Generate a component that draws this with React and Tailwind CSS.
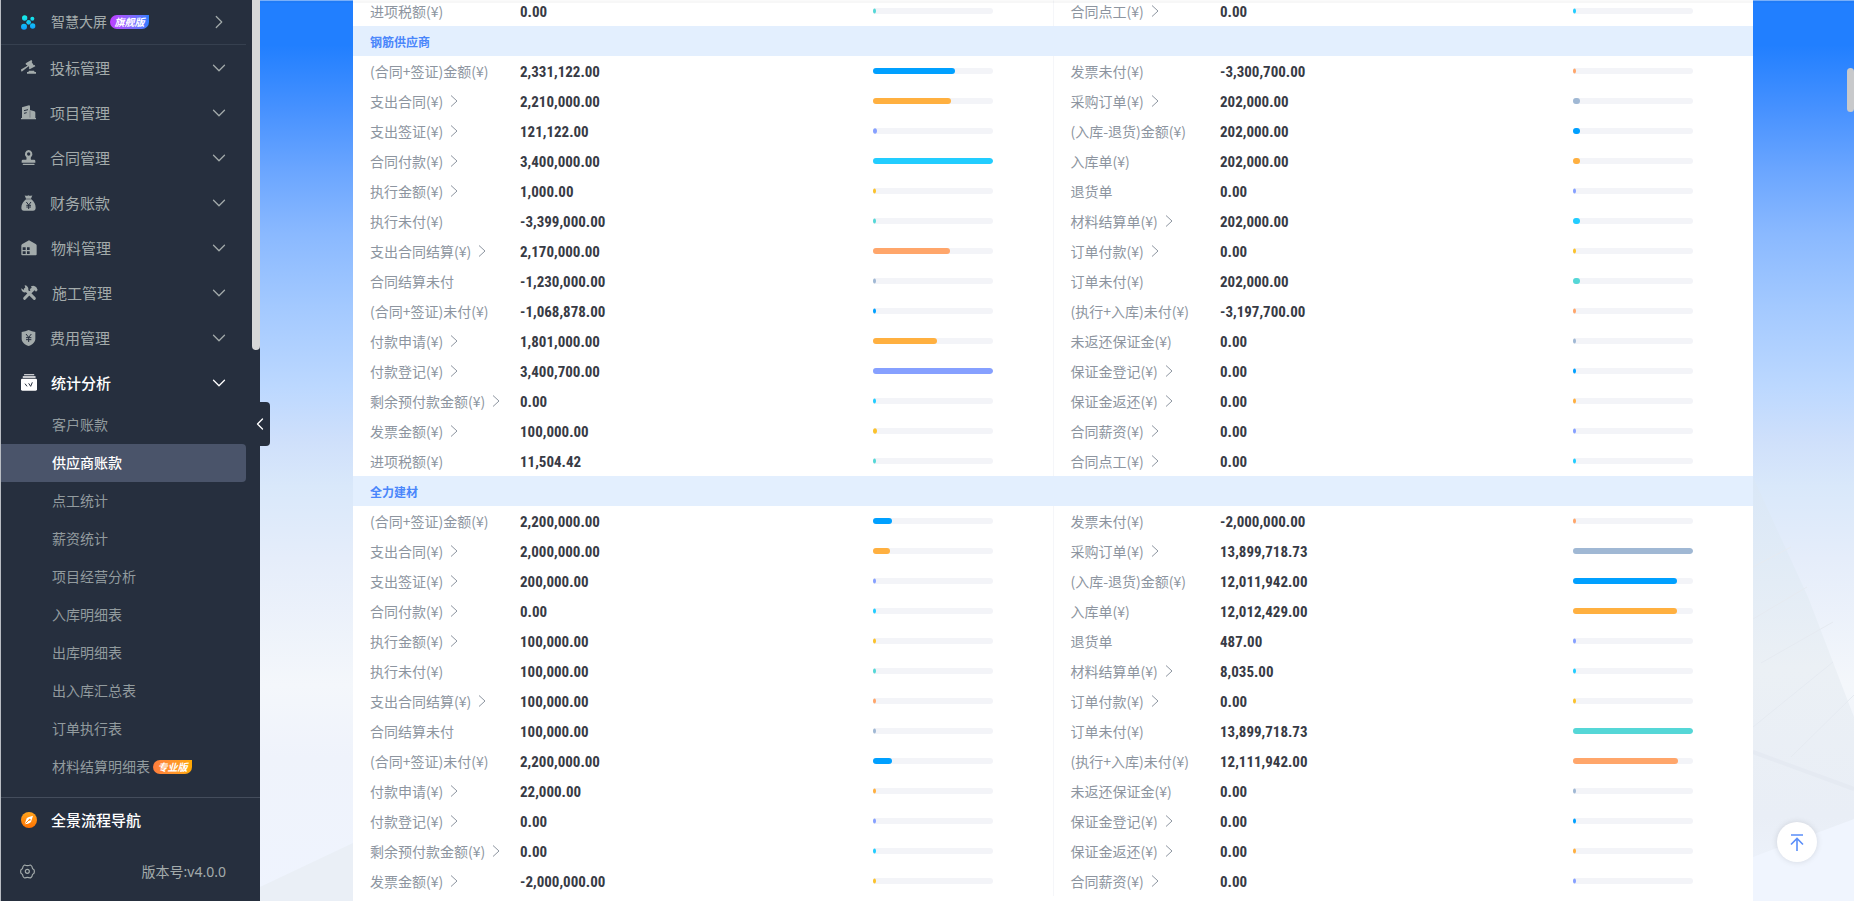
import React from 'react';
import { ChevronDown, ChevronLeft, ChevronRight } from 'lucide-react';

const BAR_COLORS = ['#00a0ff', '#ffb040', '#86a0ff', '#22cdff', '#fbc22d', '#55d7d7', '#ffa66b', '#a0b8d4'];

// 左右两列字段，link 表示可以点进明细
const LEFT_FIELDS = [
  { label: '(合同+签证)金额(¥)' },
  { label: '支出合同(¥)', link: true },
  { label: '支出签证(¥)', link: true },
  { label: '合同付款(¥)', link: true },
  { label: '执行金额(¥)', link: true },
  { label: '执行未付(¥)' },
  { label: '支出合同结算(¥)', link: true },
  { label: '合同结算未付' },
  { label: '(合同+签证)未付(¥)' },
  { label: '付款申请(¥)', link: true },
  { label: '付款登记(¥)', link: true },
  { label: '剩余预付款金额(¥)', link: true },
  { label: '发票金额(¥)', link: true },
  { label: '进项税额(¥)' },
];

const RIGHT_FIELDS = [
  { label: '发票未付(¥)' },
  { label: '采购订单(¥)', link: true },
  { label: '(入库-退货)金额(¥)' },
  { label: '入库单(¥)' },
  { label: '退货单' },
  { label: '材料结算单(¥)', link: true },
  { label: '订单付款(¥)', link: true },
  { label: '订单未付(¥)' },
  { label: '(执行+入库)未付(¥)' },
  { label: '未返还保证金(¥)' },
  { label: '保证金登记(¥)', link: true },
  { label: '保证金返还(¥)', link: true },
  { label: '合同薪资(¥)', link: true },
  { label: '合同点工(¥)', link: true },
];

const SUPPLIERS = [
  {
    name: '钢筋供应商',
    left: [2331122, 2210000, 121122, 3400000, 1000, -3399000, 2170000, -1230000, -1068878, 1801000, 3400700, 0, 100000, 11504.42],
    right: [-3300700, 202000, 202000, 202000, 0, 202000, 0, 202000, -3197700, 0, 0, 0, 0, 0],
  },
  {
    name: '全力建材',
    left: [2200000, 2000000, 200000, 0, 100000, 100000, 100000, 100000, 2200000, 22000, 0, 0, -2000000],
    right: [-2000000, 13899718.73, 12011942, 12012429, 487, 8035, 0, 13899718.73, 12111942, 0, 0, 0, 0],
  },
];

const formatMoney = (n) =>
  n.toLocaleString('en-US', { minimumFractionDigits: 2, maximumFractionDigits: 2 });

const ScreenIcon = () => (
  <svg width="15" height="15" viewBox="0 0 45 45">
    <defs>
      <linearGradient id="dots" x1="0" y1="0" x2="0" y2="45" gradientUnits="userSpaceOnUse">
        <stop offset="0" stopColor="#16f3e6" />
        <stop offset="1" stopColor="#0f9bff" />
      </linearGradient>
    </defs>
    <g fill="url(#dots)">
      <circle cx="11" cy="9" r="8" />
      <circle cx="34" cy="11" r="6" />
      <circle cx="23" cy="22" r="7" />
      <circle cx="9" cy="35" r="9" />
      <circle cx="35" cy="33" r="8" />
    </g>
  </svg>
);

const BidIcon = () => (
  <svg width="15" height="15" viewBox="0 0 45 45" fill="currentColor">
    <path d="M14 10L31 0l3 4-2 2 6 10 3-1 2 4-17 9-3-4 2-2-2-3L2 35l-3-6 20-12-1-3-3 1z" />
    <path d="M24 32h15l2 4h4v5H18v-5h4z" />
  </svg>
);

const ProjectIcon = () => (
  <svg width="15" height="15" viewBox="0 0 45 45" fill="currentColor">
    <path d="M3 7L24 1q3 0 3 3v11l13 4q3 1 3 4v16h2v4H0v-4h3z" />
    <path d="M9 17l12-3M9 25l8-2" stroke="#262f3e" strokeWidth="3" />
    <path d="M27 16v22" stroke="#262f3e" strokeWidth="1" />
  </svg>
);

const ContractIcon = () => (
  <svg width="15" height="15" viewBox="0 0 45 45" fill="currentColor">
    <path fillRule="evenodd" d="M23 0a12 12 0 0 1 8 20c-2 2-2 5-1 9h9q4 0 4 4v5H2v-5q0-4 4-4h10c1-4 1-7-1-9A12 12 0 0 1 23 0zm0 7a5 5 0 1 0 0 10a5 5 0 0 0 0-10z" />
    <rect x="5" y="41" width="36" height="4" rx="2" />
  </svg>
);

const MoneyIcon = () => (
  <svg width="15" height="16" viewBox="0 0 45 48" fill="currentColor">
    <path d="M11 1q6 3 11 0q6 3 12 0l-4 10H15zM15 13h16c8 6 13 15 13 25q0 9-8 9H9q-8 0-8-9c0-10 6-19 14-25z" />
    <path d="M16 21l7 9l7-9M23 30v12M16 31h14M16 36h14" fill="none" stroke="#262f3e" strokeWidth="3" />
  </svg>
);

const MaterialIcon = () => (
  <svg width="16" height="16" viewBox="0 0 48 48" fill="currentColor">
    <path d="M24 1l20 11q3 2 3 5v26q0 3-3 3H4q-3 0-3-3V17q0-3 3-5z" />
    <path d="M5 22h9v8H5zM18 22h8v8h-8zM5 34h9v8H5zM18 34h8v8h-8z" fill="#262f3e" />
  </svg>
);

const BuildIcon = () => (
  <svg width="17" height="16" viewBox="0 0 51 48">
    <path d="M13 13L40 40M38 12L11 40" stroke="currentColor" strokeWidth="9" strokeLinecap="round" fill="none" />
    <path d="M11 1a11 11 0 0 1 11 13l-8 8A11 11 0 0 1 1 10l7 5 5-5z" fill="currentColor" />
    <path d="M30 4q9-5 16 3l4 8-5 5-5-5-6 6-8-8 6-5z" fill="currentColor" />
  </svg>
);

const CostIcon = () => (
  <svg width="15" height="16" viewBox="0 0 45 48" fill="currentColor">
    <path d="M23 0q10 5 20 6v20c0 10-8 17-20 22C10 43 2 36 2 26V6q11-1 21-6z" />
    <path d="M15 12l8 10l8-10M23 22v14M15 23h16M15 29h16" fill="none" stroke="#262f3e" strokeWidth="3" />
  </svg>
);

const StatsIcon = () => (
  <svg width="16" height="17" viewBox="0 0 48 51" fill="currentColor">
    <rect x="9" y="1" width="31" height="3" rx="1" />
    <rect x="5" y="7" width="39" height="4" rx="1" />
    <rect x="0" y="14" width="48" height="36" rx="4" />
    <path d="M12 29l6 8M23 28l6 9M29 37l5-12" fill="none" stroke="#262f3e" strokeWidth="3" />
  </svg>
);

const CompassIcon = () => (
  <svg width="16" height="16" viewBox="0 0 48 48">
    <defs>
      <linearGradient id="compass" x1="0" y1="0" x2="0" y2="1">
        <stop offset="0" stopColor="#ffa51e" />
        <stop offset="1" stopColor="#ff7200" />
      </linearGradient>
    </defs>
    <circle cx="24" cy="24" r="24" fill="url(#compass)" />
    <path d="M36 11L30 30q-4 4-9 5l-10 2l6-18q3-3 7-4z" fill="#fff" />
    <path d="M13 35L25 23" stroke="#ff8a0c" strokeWidth="3" />
    <circle cx="26" cy="23" r="3" fill="#ff8a0c" />
  </svg>
);

const SettingIcon = () => (
  <svg width="15" height="15" viewBox="0 0 45 45" fill="none" stroke="currentColor" strokeWidth="3.5" strokeLinejoin="round">
    <path d="M14 3q8 4 17 0q4 2 5 5q0 6 6 9q2 6 0 11q-6 3-6 9q-2 3-5 5q-9-4-17 0q-4-2-5-5q0-6-6-9q-2-6 0-11q6-3 6-9q1-3 5-5z" />
    <circle cx="22" cy="22" r="6" />
  </svg>
);

const TopIcon = () => (
  <svg width="14" height="17" viewBox="0 0 14 17" fill="none" stroke="#5b8ff9" strokeWidth="1.6">
    <path d="M1 1h12M7 17V4M1 10.500L7 4.500L13 10.500" />
  </svg>
);

const MENUS = [
  { name: '投标管理', icon: BidIcon },
  { name: '项目管理', icon: ProjectIcon },
  { name: '合同管理', icon: ContractIcon },
  { name: '财务账款', icon: MoneyIcon },
  { name: '物料管理', icon: MaterialIcon },
  { name: '施工管理', icon: BuildIcon },
  { name: '费用管理', icon: CostIcon },
  { name: '统计分析', icon: StatsIcon, active: true },
];

const SUB_MENUS = [
  { name: '客户账款' },
  { name: '供应商账款', active: true },
  { name: '点工统计' },
  { name: '薪资统计' },
  { name: '项目经营分析' },
  { name: '入库明细表' },
  { name: '出库明细表' },
  { name: '出入库汇总表' },
  { name: '订单执行表' },
  { name: '材料结算明细表', badge: '专业版' },
];

const Badge = ({ className, children }) => (
  <span className={`flex h-[14px] w-[39px] items-center justify-center rounded-full rounded-tr-none bg-linear-to-r text-[10px] leading-none font-bold text-white italic ${className}`}>
    {children}
  </span>
);

const Sidebar = () => (
  <aside className="relative z-10 flex w-[260px] shrink-0 flex-col border-l border-[#b9bdc3] bg-[#262f3e] text-[#a3abab]">
    <nav className="min-h-0 flex-1 overflow-hidden pr-[14px]">
      <button type="button" className="flex h-[45px] w-full items-center border-b border-[#36404f] pr-4 pl-5 text-sm">
        <ScreenIcon />
        <span className="ml-[15px]">智慧大屏</span>
        <Badge className="ml-[3px] from-[#bd3cff] to-[#2b7dff]">旗舰版</Badge>
        <ChevronRight size={22} strokeWidth={1.3} className="ml-auto" />
      </button>
      {MENUS.map(({ name, icon: Icon, active }) => (
        <button
          key={name}
          type="button"
          className={`flex h-[45px] w-full items-center pr-4 pl-5 text-[15px] ${active ? 'font-medium text-white' : ''}`}
        >
          <Icon />
          <span className="ml-3.5">{name}</span>
          <ChevronDown size={22} strokeWidth={1.4} className="ml-auto" />
        </button>
      ))}
      <ul className="pt-px text-sm text-[#929b9e]">
        {SUB_MENUS.map((item) => (
          <li key={item.name}>
            <a
              href="#"
              className={`flex h-[38px] items-center rounded-r-sm pl-[51px] ${item.active ? 'bg-[#4a546a] font-medium text-white' : ''}`}
            >
              {item.name}
              {item.badge && <Badge className="ml-[3px] from-[#ff7d3c] to-[#ffa800]">{item.badge}</Badge>}
            </a>
          </li>
        ))}
      </ul>
    </nav>

    <div className="border-t border-[#444d5c]">
      <a href="#" className="flex h-11 items-center gap-3.5 pl-5 text-[15px] font-medium text-white">
        <CompassIcon />
        全景流程导航
      </a>
      <div className="flex h-[59px] items-center justify-between pr-[34px] pl-[19px] text-sm">
        <button type="button" aria-label="设置"><SettingIcon /></button>
        <span>版本号:v4.0.0</span>
      </div>
    </div>

    {/* 滚动条 */}
    <div className="absolute top-0 right-0 h-[350px] w-2 rounded-b-full bg-[#d7d8d9]" />
    {/* 收起菜单 */}
    <button
      type="button"
      aria-label="收起菜单"
      className="absolute top-[402px] -right-2.5 flex h-11 w-5 items-center justify-center rounded-r-sm bg-[#262f3e] text-white"
    >
      <ChevronLeft size={20} strokeWidth={1.6} />
    </button>
  </aside>
);

const Backdrop = () => (
  <>
    <svg className="absolute right-0 bottom-0" width="101" height="424" viewBox="0 0 101 424">
      <defs>
        <linearGradient id="tower" x1="0" y1="0" x2="0" y2="1">
          <stop offset="0" stopColor="#d9e7f7" />
          <stop offset="0.450" stopColor="#ebf0f5" />
          <stop offset="0.800" stopColor="#e9eef6" />
          <stop offset="1" stopColor="#eff4fd" />
        </linearGradient>
      </defs>
      <path d="M0 0L55 120L101 240V424H0z" fill="url(#tower)" />
      <path d="M0 90L38 70M0 142L54 110M8 186L80 145M0 250L80 185M38 280L101 218" stroke="#e5eaf1" fill="none" />
      <path d="M0 275L101 312" stroke="#e5eaf2" strokeWidth="4" />
      <path d="M0 380L101 342V424H0z" fill="#f0f5fe" />
    </svg>
    <svg className="absolute bottom-0 left-0" width="93" height="58" viewBox="0 0 93 58">
      <path d="M0 44L93 0V58H0z" fill="#eaeff6" />
    </svg>
  </>
);

const Arrow = () => (
  <svg width="8" height="12" viewBox="0 0 8 12" fill="none" stroke="currentColor" className="ml-[7px]">
    <path d="M1 0.500L7 6L1 11.500" />
  </svg>
);

const Cells = ({ field, value, max, index }) => (
  <>
    <th scope="row" className="pl-[17px] text-left font-normal whitespace-nowrap text-[#8d95a0]">
      {field.link ? (
        <a href="#" className="flex items-center">
          {field.label}
          <Arrow />
        </a>
      ) : (
        field.label
      )}
    </th>
    <td className="pt-0.5 font-['Roboto_Condensed','Roboto',sans-serif] text-[15px] font-bold text-[#383b45]">
      {formatMoney(value)}
    </td>
    <td className={index < 14 ? 'border-r border-[#f5f6f9]' : ''}>
      <div className="h-1.5 w-[120px] overflow-hidden rounded-full bg-[#f3f4f8]">
        <div
          className="h-full min-w-[3px] rounded-r-full"
          style={{
            width: `${Math.max(0, (value / max) * 100)}%`,
            backgroundColor: BAR_COLORS[index % BAR_COLORS.length],
          }}
        />
      </div>
    </td>
  </>
);

const Row = ({ i, left, right, max }) => (
  <tr className="h-[30px]">
    <Cells field={LEFT_FIELDS[i]} value={left} max={max} index={i} />
    <Cells field={RIGHT_FIELDS[i]} value={right} max={max} index={i + 14} />
  </tr>
);

const SupplierGroup = ({ supplier }) => {
  const max = Math.max(...supplier.left, ...supplier.right);
  return (
    <tbody>
      <tr className="h-[30px] bg-[#e3effe]">
        <th scope="colgroup" colSpan={6} className="pt-px pl-[17px] text-left text-xs font-bold text-[#4a86fb]">
          {supplier.name}
        </th>
      </tr>
      {supplier.left.map((value, i) => (
        <Row key={LEFT_FIELDS[i].label} i={i} left={value} right={supplier.right[i]} max={max} />
      ))}
    </tbody>
  );
};

export default function App() {
  return (
    <div className="flex h-screen overflow-hidden font-['Noto_Sans','Noto_Sans_CJK_SC',sans-serif] text-sm leading-5">
      <Sidebar />
      <main className="relative min-w-0 flex-1 overflow-hidden bg-[linear-gradient(180deg,#217fff_0%,#217fff_5%,#4691ff_12%,#6ba6ff_19%,#8ab9ff_26%,#a3c9ff_34%,#bcd8ff_43%,#cfe0fb_49%,#d9e8fa_54%,#e5edfa_62%,#f4f7fb_76%,#eff3fb_84%,#eff4fe_100%)] pr-2">
        <Backdrop />
        <div className="relative mx-auto flow-root min-h-full max-w-[1400px] bg-white">
          <table className="-mt-1 w-full table-fixed border-collapse font-['Noto_Sans_CJK_SC',sans-serif]">
            <colgroup>
              <col className="w-[167px]" />
              <col />
              <col className="w-[180px]" />
              <col className="w-[167px]" />
              <col />
              <col className="w-[180px]" />
            </colgroup>
            <tbody>
              <Row i={13} left={0} right={0} max={1} />
            </tbody>
            {SUPPLIERS.map((supplier) => (
              <SupplierGroup key={supplier.name} supplier={supplier} />
            ))}
          </table>
        </div>
        <div className="absolute inset-x-0 top-0 h-[3px] border-t border-white/40 bg-black/3" />
        <div className="absolute top-[68px] right-0 h-11 w-[7px] rounded-full bg-[#c8c9cb]" />
        <button
          type="button"
          aria-label="回到顶部"
          className="absolute right-[37px] bottom-[39px] flex size-10 items-center justify-center rounded-full bg-white shadow-[0_0_6px_rgba(0,0,0,0.12)]"
        >
          <TopIcon />
        </button>
      </main>
    </div>
  );
}
